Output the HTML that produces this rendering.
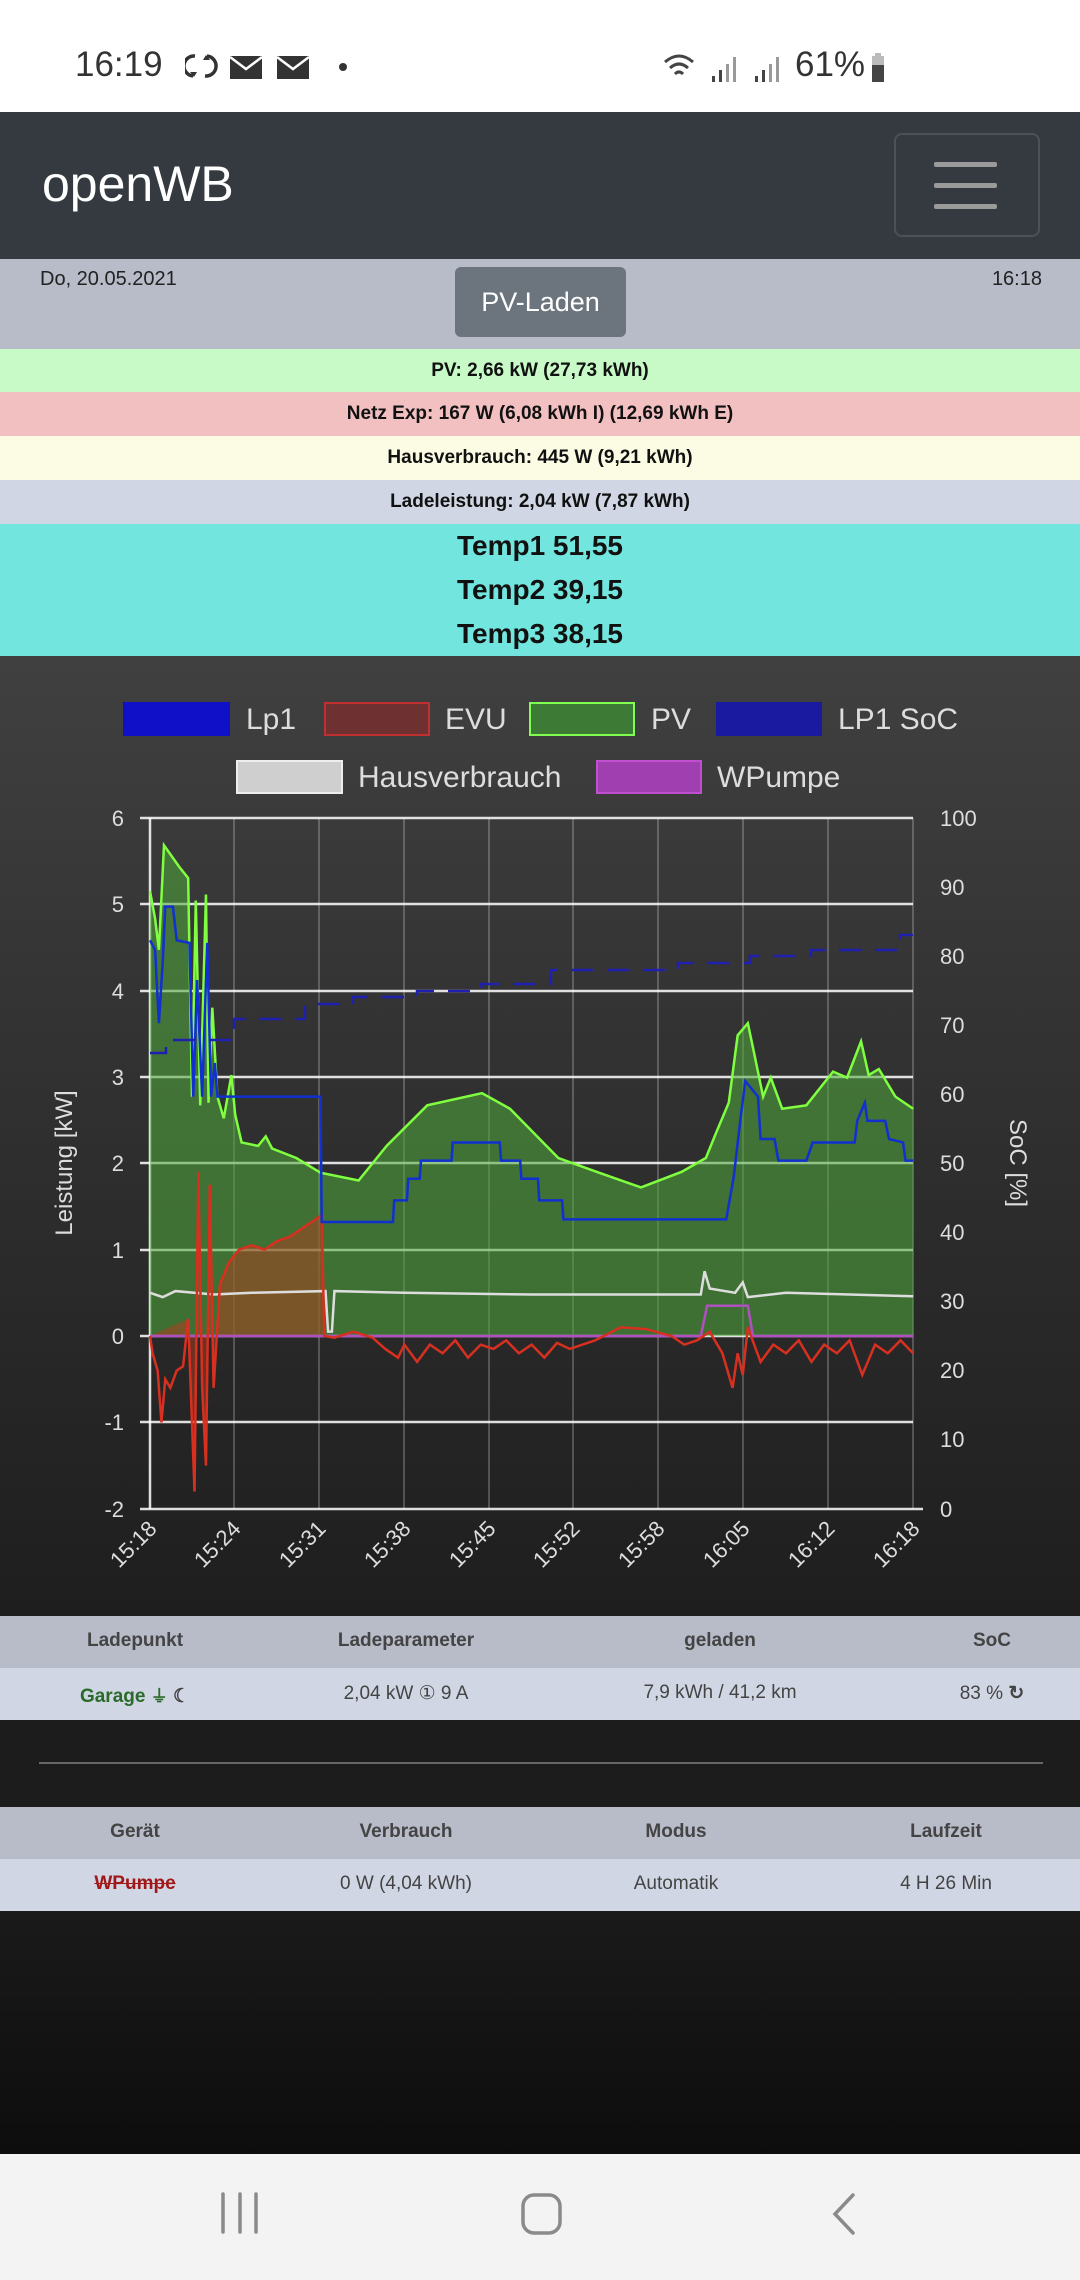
<!DOCTYPE html>
<html><head><meta charset="utf-8">
<style>
*{margin:0;padding:0;box-sizing:border-box}
body{width:1080px;height:2280px;overflow:hidden;font-family:"Liberation Sans",sans-serif;background:#151515;position:relative}
.abs{position:absolute}
.row{position:absolute;left:0;width:1080px;text-align:center;font-weight:bold;font-size:19px;color:#111}
.th{position:absolute;font-weight:bold;font-size:19px;color:#444;transform:translateX(-50%);white-space:nowrap}
.td{position:absolute;font-size:19px;color:#444;transform:translateX(-50%);white-space:nowrap}
</style></head><body>
<!-- status bar -->
<div class="abs" style="left:0;top:0;width:1080px;height:112px;background:#fff"></div>
<div class="abs" style="left:75px;top:45px;font-size:35px;color:#333">16:19</div>
<svg class="abs" style="left:185px;top:50px" width="170" height="35">
<path d="M10 6 A10 10 0 0 0 8 26 M20 26 A10 10 0 0 0 22 6" stroke="#333" stroke-width="3.5" fill="none"/>
<path d="M5 22 l4 5 l3 -5z M25 10 l-4 -5 l-3 5z" fill="#333"/>
<rect x="45" y="6" width="32" height="23" fill="#333"/><path d="M45 7 l16 12 l16 -12" stroke="#fff" stroke-width="2.5" fill="none"/>
<rect x="92" y="6" width="32" height="23" fill="#333"/><path d="M92 7 l16 12 l16 -12" stroke="#fff" stroke-width="2.5" fill="none"/>
<circle cx="158" cy="17" r="4" fill="#333"/>
</svg>
<svg class="abs" style="left:662px;top:50px" width="240" height="36">
<path d="M3 12 Q17 0 31 12 M8 18 Q17 10 26 18 M13 24 Q17 20 21 24" stroke="#444" stroke-width="3" fill="none"/>
<rect x="50" y="26" width="3" height="6" fill="#444"/><rect x="57" y="20" width="3" height="12" fill="#444"/><rect x="64" y="14" width="3" height="18" fill="#999"/><rect x="71" y="7" width="3" height="25" fill="#999"/>
<rect x="93" y="26" width="3" height="6" fill="#444"/><rect x="100" y="20" width="3" height="12" fill="#444"/><rect x="107" y="14" width="3" height="18" fill="#999"/><rect x="114" y="7" width="3" height="25" fill="#999"/>
<rect x="210" y="6" width="12" height="26" fill="#bbb"/><rect x="210" y="15" width="12" height="17" fill="#444"/><rect x="213" y="3" width="6" height="4" fill="#bbb"/>
</svg>
<div class="abs" style="left:795px;top:45px;font-size:35px;color:#333">61%</div>
<!-- navbar -->
<div class="abs" style="left:0;top:112px;width:1080px;height:147px;background:#343a40"></div>
<div class="abs" style="left:42px;top:155px;font-size:50px;color:#fff">openWB</div>
<div class="abs" style="left:894px;top:133px;width:146px;height:104px;border:2px solid rgba(255,255,255,0.12);border-radius:8px"></div>
<div class="abs" style="left:934px;top:162px;width:63px;height:5px;background:#9a9a9a;border-radius:2px"></div>
<div class="abs" style="left:934px;top:183px;width:63px;height:5px;background:#9a9a9a;border-radius:2px"></div>
<div class="abs" style="left:934px;top:204px;width:63px;height:5px;background:#9a9a9a;border-radius:2px"></div>
<!-- date row -->
<div class="abs" style="left:0;top:259px;width:1080px;height:90px;background:#b8bbc8"></div>
<div class="abs" style="left:40px;top:268px;font-size:20px;color:#222">Do, 20.05.2021</div>
<div class="abs" style="right:38px;top:268px;font-size:20px;color:#222">16:18</div>
<div class="abs" style="left:455px;top:267px;width:171px;height:70px;background:#6c757d;border-radius:6px;color:#fff;font-size:27px;text-align:center;line-height:70px">PV-Laden</div>
<!-- info rows -->
<div class="row" style="top:349px;height:43px;line-height:43px;background:#c8fac8">PV: 2,66 kW (27,73 kWh)</div>
<div class="row" style="top:392px;height:44px;line-height:44px;background:#f2c0c0">Netz Exp: 167 W (6,08 kWh I) (12,69 kWh E)</div>
<div class="row" style="top:436px;height:44px;line-height:44px;background:#fcfce4">Hausverbrauch: 445 W (9,21 kWh)</div>
<div class="row" style="top:480px;height:44px;line-height:44px;background:#d0d6e4">Ladeleistung: 2,04 kW (7,87 kWh)</div>
<div class="row" style="top:524px;height:132px;background:#72e6de;font-size:28px;line-height:44px;padding-top:0">Temp1 51,55<br>Temp2 39,15<br>Temp3 38,15</div>
<!-- chart -->
<div class="abs" style="left:0;top:656px;width:1080px;height:959px;background:linear-gradient(#404040,#1e1e1e)"></div>
<svg class="abs" style="left:0;top:0" width="1080" height="1620" font-family="Liberation Sans, sans-serif">
<!-- legend -->
<g font-size="30" fill="#ddd">
<rect x="123" y="702" width="107" height="34" fill="#1010c8"/><text x="246" y="729">Lp1</text>
<rect x="325" y="703" width="104" height="32" fill="#6e3030" stroke="#c03030" stroke-width="2"/><text x="445" y="729">EVU</text>
<rect x="530" y="703" width="104" height="32" fill="#3c7a35" stroke="#80ff50" stroke-width="2"/><text x="651" y="729">PV</text>
<rect x="716" y="702" width="106" height="34" fill="#1a1aa0"/><text x="838" y="729">LP1 SoC</text>
<rect x="237" y="761" width="105" height="32" fill="#cfcfcf" stroke="#eee" stroke-width="2"/><text x="358" y="787">Hausverbrauch</text>
<rect x="597" y="761" width="104" height="32" fill="#a040b0" stroke="#c050d0" stroke-width="2"/><text x="717" y="787">WPumpe</text>
</g>
<!-- vertical grid -->
<g stroke="rgba(255,255,255,0.22)" stroke-width="2">
<line x1="234" y1="818" x2="234" y2="1509"/><line x1="319" y1="818" x2="319" y2="1509"/><line x1="404" y1="818" x2="404" y2="1509"/><line x1="489" y1="818" x2="489" y2="1509"/><line x1="573" y1="818" x2="573" y2="1509"/><line x1="658" y1="818" x2="658" y2="1509"/><line x1="743" y1="818" x2="743" y2="1509"/><line x1="828" y1="818" x2="828" y2="1509"/><line x1="913" y1="818" x2="913" y2="1509"/>
</g>
<g stroke="rgba(255,255,255,0.85)" stroke-width="2.5">
<line x1="140" y1="818" x2="913" y2="818"/><line x1="140" y1="904" x2="913" y2="904"/><line x1="140" y1="991" x2="913" y2="991"/><line x1="140" y1="1077" x2="913" y2="1077"/><line x1="140" y1="1163" x2="913" y2="1163"/><line x1="140" y1="1250" x2="913" y2="1250"/><line x1="140" y1="1336" x2="913" y2="1336"/><line x1="140" y1="1422" x2="913" y2="1422"/><line x1="140" y1="1509" x2="913" y2="1509"/>
<line x1="150" y1="818" x2="150" y2="1509"/><line x1="913" y1="1509" x2="923" y2="1509"/>
</g>
<g transform="matrix(12.72,0,0,-86.4,150,1336)">
<path d="M0 0 L0 5.15 L0.4 4.83 L0.7 4.47 L1.1 5.68 L2.3 5.43 L3 5.3 L3.3 2.77 L3.6 5.04 L3.95 2.67 L4.4 5.11 L4.6 2.7 L4.9 3.8 L5.3 2.77 L5.8 2.52 L6.4 3.02 L6.7 2.56 L7.2 2.24 L8.5 2.2 L9.1 2.31 L9.6 2.17 L11.5 2.06 L13.4 1.89 L16.4 1.8 L18.6 2.2 L21.8 2.67 L26.1 2.81 L28.3 2.63 L32.1 2.06 L35.3 1.89 L38.6 1.72 L41.8 1.9 L43.7 2.06 L44.5 2.35 L45.5 2.7 L46.2 3.48 L47 3.62 L47.5 3.27 L48.2 2.77 L48.8 2.99 L49.7 2.63 L51.6 2.67 L53.7 3.06 L54.8 2.99 L55.9 3.41 L56.5 3.02 L57.3 3.09 L58.6 2.77 L60 2.63 L60 0 Z" fill="rgba(80,170,60,0.55)" stroke="none"/>
<path d="M0 0 L3 0.2 L3.5 -1.8 L3.8 1.9 L4.1 -0.6 L4.4 -1.5 L4.7 1.75 L5 -0.6 L5.5 0.6 L6.2 0.85 L7 1 L8 1.05 L9 1 L10 1.1 L11 1.15 L12 1.25 L13 1.35 L13.5 1.4 L13.7 0 Z" fill="rgba(180,60,30,0.5)"/>
<path d="M0 5.15 L0.4 4.83 L0.7 4.47 L1.1 5.68 L2.3 5.43 L3 5.3 L3.3 2.77 L3.6 5.04 L3.95 2.67 L4.4 5.11 L4.6 2.7 L4.9 3.8 L5.3 2.77 L5.8 2.52 L6.4 3.02 L6.7 2.56 L7.2 2.24 L8.5 2.2 L9.1 2.31 L9.6 2.17 L11.5 2.06 L13.4 1.89 L16.4 1.8 L18.6 2.2 L21.8 2.67 L26.1 2.81 L28.3 2.63 L32.1 2.06 L35.3 1.89 L38.6 1.72 L41.8 1.9 L43.7 2.06 L44.5 2.35 L45.5 2.7 L46.2 3.48 L47 3.62 L47.5 3.27 L48.2 2.77 L48.8 2.99 L49.7 2.63 L51.6 2.67 L53.7 3.06 L54.8 2.99 L55.9 3.41 L56.5 3.02 L57.3 3.09 L58.6 2.77 L60 2.63" fill="none" stroke="#80ff40" stroke-width="2.5" vector-effect="non-scaling-stroke"/>
<path d="M0 0.5 L1 0.45 L2 0.52 L5 0.48 L8 0.5 L13.8 0.52 L14 0.05 L14.3 0.05 L14.5 0.52 L20 0.5 L30 0.48 L43.3 0.48 L43.6 0.75 L44 0.55 L46 0.5 L46.6 0.62 L47 0.45 L50 0.5 L60 0.46" fill="none" stroke="#ddd" stroke-width="2.5" vector-effect="non-scaling-stroke"/>
<path d="M0 0 L43.3 0 L43.8 0.35 L47 0.35 L47.4 0 L60 0" fill="none" stroke="#b050c0" stroke-width="2.5" vector-effect="non-scaling-stroke"/>
<path d="M0 0 L0.2 -0.2 L0.6 -0.4 L0.9 -1 L1.2 -0.5 L1.6 -0.6 L2.1 -0.4 L2.6 -0.35 L3 0.2 L3.5 -1.8 L3.8 1.9 L4.1 -0.6 L4.4 -1.5 L4.7 1.75 L5 -0.6 L5.5 0.6 L6.2 0.85 L7 1 L8 1.05 L9 1 L10 1.1 L11 1.15 L12 1.25 L13 1.35 L13.5 1.4 L13.7 0 L14.5 -0.02 L16 0.05 L17.5 -0.02 L18.5 -0.15 L19.5 -0.25 L20 -0.1 L21 -0.3 L22 -0.1 L23 -0.2 L24 -0.05 L25 -0.25 L26 -0.1 L27 -0.15 L28 -0.05 L29 -0.2 L30 -0.1 L31 -0.25 L32 -0.08 L33 -0.15 L35 -0.05 L37 0.1 L39 0.08 L41 0 L42 -0.1 L43 -0.05 L44 0.05 L45 -0.2 L45.8 -0.6 L46.2 -0.2 L46.6 -0.45 L47 0.1 L47.5 -0.1 L48 -0.3 L49 -0.1 L50 -0.2 L51 -0.05 L52 -0.3 L53 -0.1 L54 -0.2 L55 -0.05 L56 -0.45 L57 -0.1 L58 -0.2 L59 -0.05 L60 -0.2" fill="none" stroke="#d83020" stroke-width="2.5" vector-effect="non-scaling-stroke"/>
<path d="M0 4.58 L0.4 4.47 L0.7 3.62 L1 4.33 L1.2 4.97 L1.8 4.97 L2.1 4.58 L3.1 4.55 L3.4 2.77 L3.7 4.12 L4.1 2.77 L4.5 4.55 L4.8 2.77 L5.1 3.16 L5.3 2.77 L13.4 2.77 L13.5 1.32 L19.1 1.32 L19.2 1.57 L20.2 1.57 L20.3 1.82 L21.2 1.82 L21.3 2.03 L23.7 2.03 L23.8 2.24 L27.5 2.24 L27.6 2.03 L29.1 2.03 L29.2 1.82 L30.5 1.82 L30.6 1.57 L32.4 1.57 L32.5 1.35 L45.3 1.35 L45.9 1.85 L46.4 2.49 L46.8 2.95 L47.8 2.77 L48 2.28 L49.1 2.28 L49.4 2.03 L51.6 2.03 L52.1 2.24 L55.4 2.24 L55.6 2.49 L56.2 2.7 L56.4 2.49 L57.8 2.49 L58.1 2.28 L59.2 2.24 L59.4 2.03 L60 2.03" fill="none" stroke="#1030d0" stroke-width="2.5" vector-effect="non-scaling-stroke"/>
</g>
<path d="M150 1053 H166 V1040 H234 V1019 H305 V1004 H353 V997 H417 V991 H481 V984 H551 V970 H678 V963 H750 V956 H811 V950 H900 V935 H913" fill="none" stroke="#2020b0" stroke-width="2.5" stroke-dasharray="22 14"/>
<!-- axis labels -->
<g font-size="22" fill="#ddd" text-anchor="end">
<text x="124" y="826">6</text><text x="124" y="912">5</text><text x="124" y="999">4</text><text x="124" y="1085">3</text><text x="124" y="1171">2</text><text x="124" y="1258">1</text><text x="124" y="1344">0</text><text x="124" y="1430">-1</text><text x="124" y="1517">-2</text>
</g>
<g font-size="22" fill="#ddd">
<text x="940" y="826">100</text><text x="940" y="895">90</text><text x="940" y="964">80</text><text x="940" y="1033">70</text><text x="940" y="1102">60</text><text x="940" y="1171">50</text><text x="940" y="1240">40</text><text x="940" y="1309">30</text><text x="940" y="1378">20</text><text x="940" y="1447">10</text><text x="940" y="1517">0</text>
</g>
<text transform="translate(72,1163) rotate(-90)" font-size="24" fill="#ddd" text-anchor="middle">Leistung [kW]</text>
<text transform="translate(1010,1163) rotate(90)" font-size="24" fill="#ddd" text-anchor="middle">SoC [%]</text>
<g font-size="22" fill="#ddd" text-anchor="end">
<text transform="translate(158,1530) rotate(-45)">15:18</text>
<text transform="translate(242,1530) rotate(-45)">15:24</text>
<text transform="translate(327,1530) rotate(-45)">15:31</text>
<text transform="translate(412,1530) rotate(-45)">15:38</text>
<text transform="translate(497,1530) rotate(-45)">15:45</text>
<text transform="translate(581,1530) rotate(-45)">15:52</text>
<text transform="translate(666,1530) rotate(-45)">15:58</text>
<text transform="translate(751,1530) rotate(-45)">16:05</text>
<text transform="translate(836,1530) rotate(-45)">16:12</text>
<text transform="translate(921,1530) rotate(-45)">16:18</text>
</g>
</svg>
<!-- table 1 -->
<div class="abs" style="left:0;top:1615px;width:1080px;height:153px;background:#1e1e1e"></div>
<div class="abs" style="left:0;top:1616px;width:1080px;height:52px;background:#b8bbc8"></div>
<div class="abs" style="left:0;top:1668px;width:1080px;height:52px;background:#d0d6e4"></div>
<div class="th" style="left:135px;top:1630px">Ladepunkt</div>
<div class="th" style="left:406px;top:1630px">Ladeparameter</div>
<div class="th" style="left:720px;top:1630px">geladen</div>
<div class="th" style="left:992px;top:1630px">SoC</div>
<div class="td" style="left:135px;top:1682px;color:#2a6a2a;font-weight:bold">Garage <span style="font-size:17px">⏚</span> <span style="color:#444">☾</span></div>
<div class="td" style="left:406px;top:1682px">2,04 kW ① 9 A</div>
<div class="td" style="left:720px;top:1682px">7,9 kWh / 41,2 km</div>
<div class="td" style="left:992px;top:1682px">83 % <b>↻</b></div>
<div class="abs" style="left:0;top:1720px;width:1080px;height:87px;background:#1c1c1c"></div>
<div class="abs" style="left:39px;top:1762px;width:1004px;height:2px;background:#666"></div>
<!-- table 2 -->
<div class="abs" style="left:0;top:1807px;width:1080px;height:52px;background:#b8bbc8"></div>
<div class="abs" style="left:0;top:1859px;width:1080px;height:52px;background:#d0d6e4"></div>
<div class="th" style="left:135px;top:1821px">Gerät</div>
<div class="th" style="left:406px;top:1821px">Verbrauch</div>
<div class="th" style="left:676px;top:1821px">Modus</div>
<div class="th" style="left:946px;top:1821px">Laufzeit</div>
<div class="td" style="left:135px;top:1873px;color:#a01818;font-weight:bold;text-decoration:line-through">WPumpe</div>
<div class="td" style="left:406px;top:1873px">0 W (4,04 kWh)</div>
<div class="td" style="left:676px;top:1873px">Automatik</div>
<div class="td" style="left:946px;top:1873px">4 H 26 Min</div>
<div class="abs" style="left:0;top:1911px;width:1080px;height:243px;background:linear-gradient(#1a1a1a,#0d0d0d)"></div>
<!-- nav bar -->
<div class="abs" style="left:0;top:2154px;width:1080px;height:126px;background:#f3f3f3"></div>
<svg class="abs" style="left:0;top:2154px" width="1080" height="126">
<g stroke="#8a8a8a" stroke-width="3.5" stroke-linecap="round" fill="none">
<line x1="223" y1="40" x2="223" y2="78"/><line x1="240" y1="40" x2="240" y2="78"/><line x1="256" y1="40" x2="256" y2="78"/>
<rect x="523" y="41" width="37" height="38" rx="11"/>
<path d="M853 41 L835 60 L853 79"/>
</g>
</svg>
</body></html>
